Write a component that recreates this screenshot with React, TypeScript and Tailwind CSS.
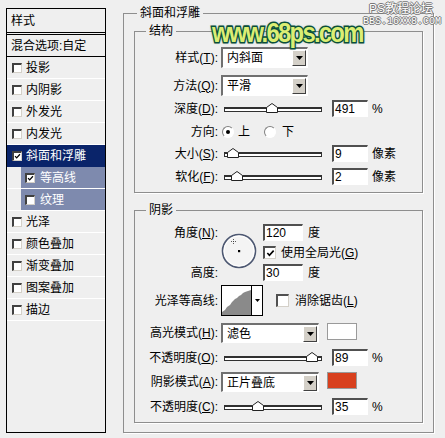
import React from "react";

type StyleItem = { label: string; checked?: boolean; selected?: boolean; sub?: boolean };

const styleItems: StyleItem[] = [
  { label: "投影" },
  { label: "内阴影" },
  { label: "外发光" },
  { label: "内发光" },
  { label: "斜面和浮雕", checked: true, selected: true },
  { label: "等高线", checked: true, sub: true },
  { label: "纹理", sub: true },
  { label: "光泽" },
  { label: "颜色叠加" },
  { label: "渐变叠加" },
  { label: "图案叠加" },
  { label: "描边" },
];

function Check({ size = 10 }: { size?: number }) {
  return (
    <svg width={size} height={size} viewBox="0 0 10 10">
      <path d="M1.5 4.5l2.3 2.5L8.5 1.8" fill="none" stroke="#000" strokeWidth="1.8" />
    </svg>
  );
}

function SmallBox({ checked }: { checked?: boolean }) {
  return (
    <span className="flex h-[10px] w-[10px] shrink-0 items-center justify-center border-t-2 border-l-2 border-r border-b border-t-[#404040] border-l-[#404040] border-r-[#d4d0c8] border-b-[#d4d0c8] bg-white">
      {checked && <Check size={7} />}
    </span>
  );
}

function StyleList() {
  return (
    <div className="ml-[6px] mt-[8px] flex h-[425px] w-[100px] shrink-0 flex-col border border-black">
      <div className="flex h-[26px] items-center border-b-[3px] border-double border-black pl-[4px]">样式</div>
      <div className="flex h-[22px] items-center border-b border-black pl-[4px]">混合选项:自定</div>
      {styleItems.map((item) => {
        if (item.sub) {
          return (
            <div key={item.label} className="flex h-[22px] border-b border-white">
              <div className="ml-[14px] flex flex-1 items-center bg-[#7e8aae] pl-[4px] text-white">
                <SmallBox checked={item.checked} />
                <span className="ml-[5px]">{item.label}</span>
              </div>
            </div>
          );
        }
        return (
          <div
            key={item.label}
            className={`flex h-[22px] items-center border-b pl-[5px] ${
              item.selected ? "border-[#0a246a] bg-[#0a246a] text-white" : "border-white"
            }`}
          >
            <SmallBox checked={item.checked} />
            <span className="ml-[4px]">{item.label}</span>
          </div>
        );
      })}
    </div>
  );
}

function Row({ label, className, children }: { label: React.ReactNode; className: string; children: React.ReactNode }) {
  return (
    <div className={`flex items-center ${className}`}>
      <span className="w-[83px] shrink-0 text-right">{label}</span>
      <div className="ml-[3px] flex items-center">{children}</div>
    </div>
  );
}

function Select({ value, className }: { value: string; className: string }) {
  return (
    <div
      className={`flex items-center border-t-2 border-l-2 border-r border-b border-t-[#707070] border-l-[#707070] border-r-white border-b-white bg-white ${className}`}
    >
      <span className="flex-1 pl-[4px]">{value}</span>
      <span className="mr-[1px] flex h-[16px] w-[14px] items-center justify-center border border-t-white border-l-white border-r-[#404040] border-b-[#404040] bg-[#d4d0c8]">
        <svg width="7" height="4" viewBox="0 0 7 4">
          <path d="M0 0H7L3.5 4Z" fill="#000" />
        </svg>
      </span>
    </div>
  );
}

function Field({ value, className = "w-[36px]" }: { value: string; className?: string }) {
  return (
    <div
      className={`flex h-[17px] items-center border-t-2 border-l-2 border-r border-b border-t-[#505050] border-l-[#505050] border-r-white border-b-white bg-white pl-[1px] ${className}`}
    >
      {value}
    </div>
  );
}

function Slider({ pos }: { pos: number }) {
  return (
    <div className="relative h-[17px] w-[104px]">
      <div className="absolute left-[3px] top-[7px] h-[5px] w-[98px] border-t-2 border-l border-r border-b border-[#303030] bg-white" />
      <svg className="absolute top-[3px]" style={{ left: pos - 3 }} width="12" height="10" viewBox="0 0 12 10">
        <path d="M0.5 9.5V4.5L6 0.5L11.5 4.5V9.5Z" fill="#fff" stroke="#222" />
      </svg>
    </div>
  );
}

function Radio({ checked, className = "" }: { checked?: boolean; className?: string }) {
  return (
    <span
      className={`flex h-[12px] w-[12px] items-center justify-center rounded-full border border-t-[#808080] border-l-[#808080] border-r-white border-b-white bg-white ${className}`}
    >
      {checked && <span className="h-[4px] w-[4px] rounded-full bg-black" />}
    </span>
  );
}

function CheckBox({ checked }: { checked?: boolean }) {
  return (
    <span className="flex h-[13px] w-[13px] shrink-0 items-center justify-center border-t-2 border-l-2 border-r border-b border-t-[#505050] border-l-[#505050] border-r-[#d4d0c8] border-b-[#d4d0c8] bg-white">
      {checked && <Check size={9} />}
    </span>
  );
}

function AngleDial() {
  return (
    <svg className="ml-[3px] mt-[9px] shrink-0" width="36" height="36" viewBox="0 0 36 36">
      <circle cx="18" cy="18" r="16.5" fill="#f4f4f4" stroke="#4d5872" strokeWidth="1.6" />
      <circle cx="18" cy="18" r="15" fill="none" stroke="#ffffff" strokeWidth="1" />
      <rect x="17" y="17" width="2.2" height="2.2" fill="#000" />
      <path d="M12.5 6v5M10 8.5h5" stroke="#333" strokeWidth="0.8" strokeDasharray="1 1" />
    </svg>
  );
}

function ContourPicker() {
  return (
    <div className="flex h-[31px] w-[42px] border border-black bg-white">
      <svg className="shrink-0 border-r border-black" width="30" height="29" viewBox="0 0 29 29">
        <path
          d="M0 29V26L3 24L5 21L8 19L10 16L13 13L15 12L17 10L19 9L21 7L23 6L26 5L29 4V29Z"
          fill="#8a8a8a"
        />
      </svg>
      <div className="flex flex-1 items-center justify-center">
        <svg width="5" height="3" viewBox="0 0 5 3">
          <path d="M0 0H5L2.5 3Z" fill="#000" />
        </svg>
      </div>
    </div>
  );
}

function Structure() {
  return (
    <fieldset className="mt-[4px] w-[289px] min-w-0 border border-[#8e8e8e] pb-[7px] shadow-[1px_1px_0_#fff]">
      <legend className="ml-[11px] px-[3px]">结构</legend>
      <Row className="mt-[9px] h-[21px]" label={<>样式(<u>T</u>):</>}>
        <Select value="内斜面" className="h-[21px] w-[87px]" />
      </Row>
      <Row className="mt-[7px] h-[21px]" label={<>方法(<u>Q</u>):</>}>
        <Select value="平滑" className="h-[21px] w-[87px]" />
      </Row>
      <Row className="mt-[4px] h-[17px]" label={<>深度(<u>D</u>):</>}>
        <Slider pos={48} />
        <Field value="491" className="ml-[7px] w-[36px]" />
        <span className="ml-[4px]">%</span>
      </Row>
      <Row className="mt-[6px] h-[18px]" label="方向:">
        <Radio checked className="ml-[1px]" />
        <span className="ml-[4px]">上</span>
        <Radio className="ml-[14px]" />
        <span className="ml-[6px]">下</span>
      </Row>
      <Row className="mt-[4px] h-[17px]" label={<>大小(<u>S</u>):</>}>
        <Slider pos={9} />
        <Field value="9" className="ml-[7px] w-[36px]" />
        <span className="ml-[4px]">像素</span>
      </Row>
      <Row className="mt-[6px] h-[17px]" label={<>软化(<u>F</u>):</>}>
        <Slider pos={13} />
        <Field value="2" className="ml-[7px] w-[36px]" />
        <span className="ml-[4px]">像素</span>
      </Row>
    </fieldset>
  );
}

function Shading() {
  return (
    <fieldset className="mt-[10px] w-[289px] min-w-0 border border-[#8e8e8e] pb-[7px] shadow-[1px_1px_0_#fff]">
      <legend className="ml-[11px] px-[3px]">阴影</legend>
      <div className="mt-[7px] flex">
        <div className="flex w-[83px] shrink-0 flex-col justify-between">
          <span className="flex h-[17px] items-center justify-end">角度(<u>N</u>):</span>
          <span className="flex h-[17px] items-center justify-end">高度:</span>
        </div>
        <AngleDial />
        <div className="ml-[6px] flex flex-col">
          <div className="flex h-[17px] items-center">
            <Field value="120" className="w-[40px]" />
            <span className="ml-[5px]">度</span>
          </div>
          <div className="mt-[5px] flex h-[13px] items-center">
            <CheckBox checked />
            <span className="ml-[5px]">使用全局光(<u>G</u>)</span>
          </div>
          <div className="mt-[5px] flex h-[17px] items-center">
            <Field value="30" className="w-[40px]" />
            <span className="ml-[5px]">度</span>
          </div>
        </div>
      </div>
      <Row className="mt-[4px] h-[31px]" label="光泽等高线:">
        <ContourPicker />
        <span className="ml-[13px]">
          <CheckBox />
        </span>
        <span className="ml-[6px]">消除锯齿(<u>L</u>)</span>
      </Row>
      <Row className="mt-[7px] h-[20px]" label={<>高光模式(<u>H</u>):</>}>
        <Select value="滤色" className="h-[20px] w-[98px]" />
        <span className="ml-[8px] h-[17px] w-[30px] self-start border border-[#9a9a9a] bg-white" />
      </Row>
      <Row className="mt-[6px] h-[17px]" label={<>不透明度(<u>O</u>):</>}>
        <Slider pos={88} />
        <Field value="89" className="ml-[7px] w-[36px]" />
        <span className="ml-[4px]">%</span>
      </Row>
      <Row className="mt-[6px] h-[20px]" label={<>阴影模式(<u>A</u>):</>}>
        <Select value="正片叠底" className="h-[20px] w-[98px]" />
        <span className="ml-[8px] h-[17px] w-[30px] self-start border border-[#9a9a9a] bg-[#d8401e]" />
      </Row>
      <Row className="mt-[6px] h-[17px]" label={<>不透明度(<u>C</u>):</>}>
        <Slider pos={34} />
        <Field value="35" className="ml-[7px] w-[36px]" />
        <span className="ml-[4px]">%</span>
      </Row>
    </fieldset>
  );
}

function Watermarks() {
  return (
    <>
      <div className="pointer-events-none absolute left-[212px] top-[19px] origin-left scale-x-[0.85] font-['Liberation_Sans',sans-serif] text-[28px] font-bold leading-[28px] tracking-[-2px] text-[#dcee74] [-webkit-text-stroke:3px_#0b4f3c] [paint-order:stroke_fill] [text-shadow:0_0_3px_#0b4f3c]">
        www.68ps.com
      </div>
      <div className="pointer-events-none absolute right-[12px] top-[2px] text-[12px] leading-[14px] text-white [text-shadow:1px_0_#777,-1px_0_#777,0_1px_#777,0_-1px_#777]">
        PS教程论坛
      </div>
      <div className="pointer-events-none absolute right-[4px] top-[16px] font-['Liberation_Mono',monospace] text-[10px] leading-[12px] text-white [text-shadow:1px_0_#777,-1px_0_#777,0_1px_#777,0_-1px_#777]">
        BBS.16XX8.COM
      </div>
    </>
  );
}

export default function App() {
  return (
    <div className="relative flex h-[438px] w-[445px] overflow-hidden bg-[#efefef] font-['Liberation_Sans','Noto_Sans_CJK_SC',sans-serif] text-[12px] leading-[14px] text-black">
      <StyleList />
      <fieldset className="ml-[17px] mt-[6px] w-[311px] min-w-0 self-start border border-[#8e8e8e] px-[10px] pb-[9px] shadow-[1px_1px_0_#fff]">
        <legend className="ml-[3px] px-[3px]">斜面和浮雕</legend>
        <Structure />
        <Shading />
      </fieldset>
      <Watermarks />
    </div>
  );
}
